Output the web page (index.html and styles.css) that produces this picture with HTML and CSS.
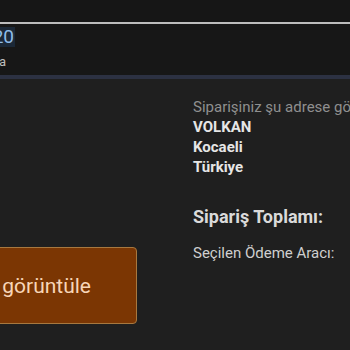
FILE: index.html
```html
<!DOCTYPE html>
<html lang="tr">
<head>
<meta charset="utf-8">
<link rel="stylesheet" href="styles.css">
</head>
<body>
<div class="topbar"></div>
<div class="meta">
  <div class="meta-inner">
    <a class="num">#2020</a>
    <span class="sub">Ödendi, Kargoda</span>
  </div>
</div>
<main class="content">
  <div class="left">
    <button class="btn">Siparişi görüntüle</button>
  </div>
  <div class="right">
    <p class="muted">Siparişiniz şu adrese gönderilecek:</p>
    <p class="strong">VOLKAN</p>
    <p class="strong">Kocaeli</p>
    <p class="strong">Türkiye</p>
    <h2 class="total">Sipariş Toplamı:</h2>
    <p class="pay">Seçilen Ödeme Aracı:</p>
  </div>
</main>
</body>
</html>
```
FILE: styles.css
```css
html, body { margin: 0; padding: 0; }
body {
  background: #1f1f1f;
  font-family: Roboto, "Noto Sans", sans-serif;
  width: 350px;
  height: 350px;
  overflow: hidden;
}
.topbar {
  height: 22px;
  background: #161616;
  border-bottom: 2px solid #bdbdbd;
}
.meta {
  height: 51px;
  background: #171717;
  border-bottom: 4px solid #2c3142;
  overflow: hidden;
}
.meta-inner {
  display: flex;
  flex-direction: column;
  align-items: flex-end;
  width: 200px;
  margin-left: -185px;
  padding-top: 3px;
}
.num {
  font-size: 19px;
  line-height: 20px;
  color: #8fbde9;
  background: #1b2837;
  padding: 0 1px;
}
.sub {
  font-size: 13px;
  line-height: 18px;
  margin-top: 6px;
  margin-right: 9px;
  color: #bdbdbd;
}
.content {
  display: flex;
  gap: 56px;
}
.left {
  width: 137px;
  display: flex;
  justify-content: flex-end;
  padding-top: 168px;
}
.btn {
  flex: none;
  width: 280px;
  height: 77px;
  background: #7b3603;
  border: 1px solid #a7783f;
  border-radius: 4px;
  color: #f8d6b8;
  font-family: Roboto, sans-serif;
  font-size: 21px;
  text-align: right;
  padding: 0 45px 0 0;
}
.right {
  flex: none;
  width: 220px;
  padding-top: 18px;
  white-space: nowrap;
}
.right p { margin: 0; }
.muted {
  color: #8f8f8f;
  font-size: 15px;
  line-height: 20px;
}
.strong {
  color: #e6e6e6;
  font-weight: 700;
  font-size: 15px;
  line-height: 20px;
}
.total {
  margin: 28px 0 0;
  font-size: 18px;
  font-weight: 700;
  color: #dadada;
  line-height: 24px;
}
.pay {
  margin-top: 14px !important;
  font-size: 15px;
  line-height: 20px;
  color: #cfcfcf;
}
```
